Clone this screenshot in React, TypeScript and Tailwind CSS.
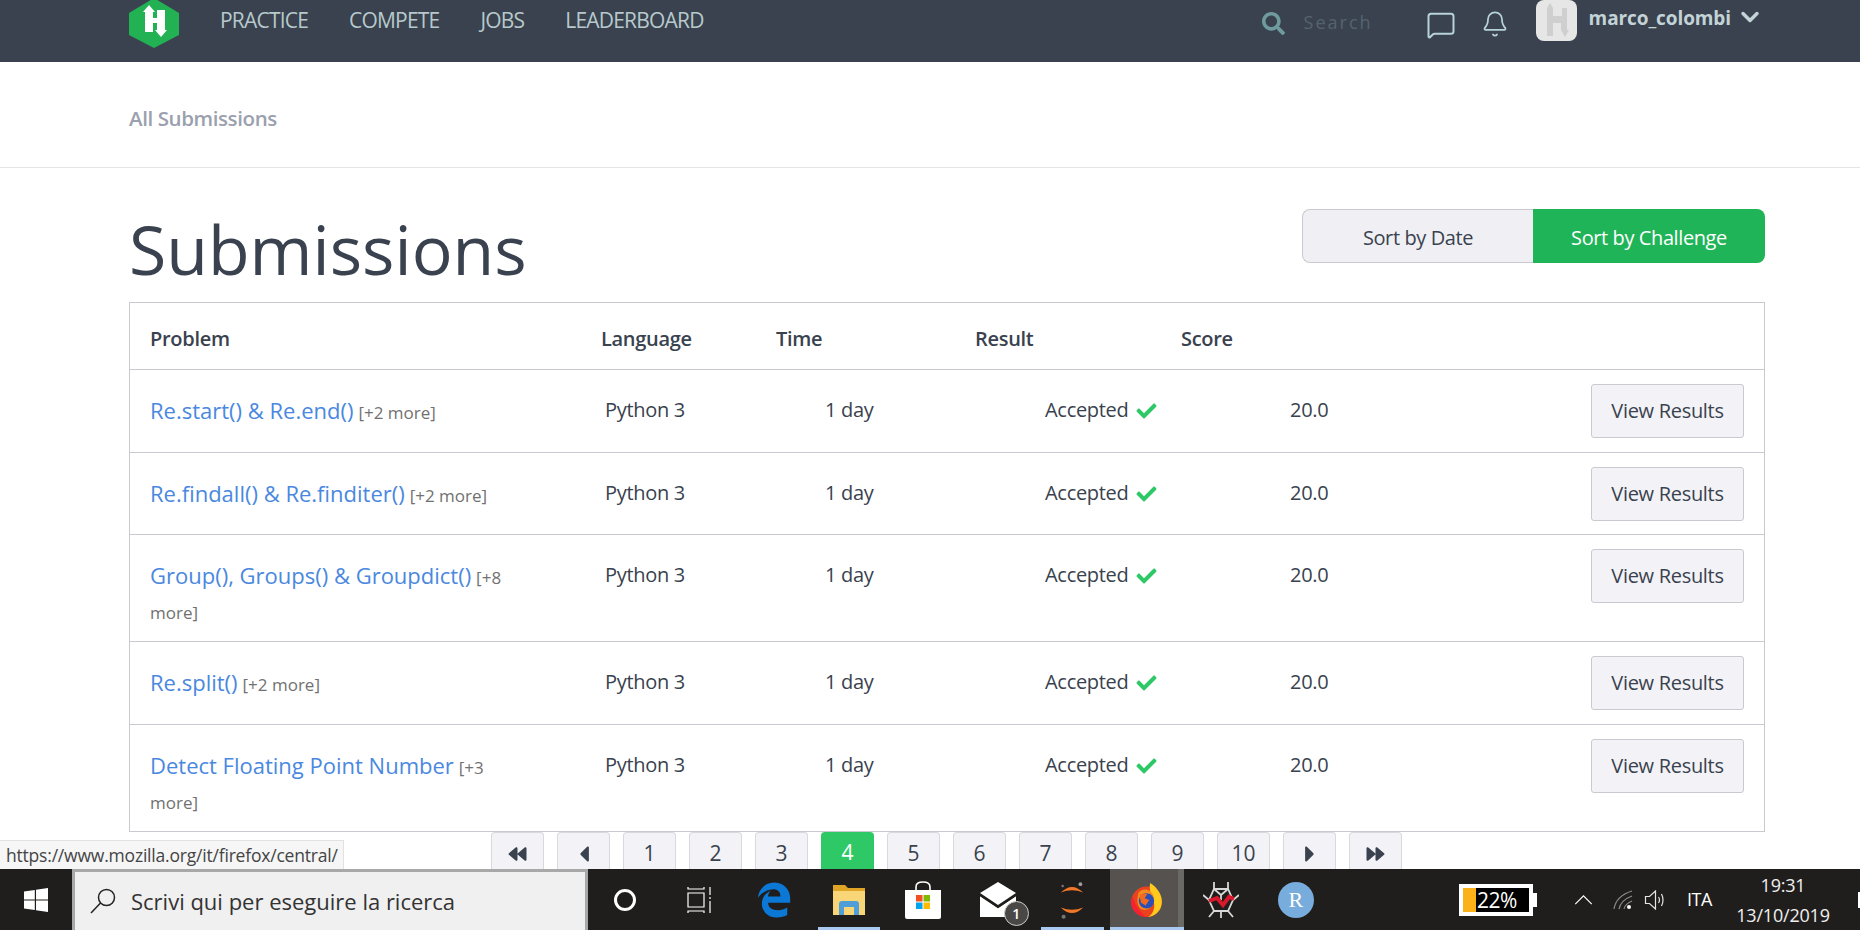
import React from 'react';
import { Bell, ChevronDown, MessageSquare } from 'lucide-react';
import { FaBackward, FaCaretLeft, FaCaretRight, FaCheck, FaForward, FaSearch, FaEdgeLegacy } from 'react-icons/fa';

const rows = [
  { title: 'Re.start() & Re.end()', more: '[+2 more]' },
  { title: 'Re.findall() & Re.finditer()', more: '[+2 more]' },
  { title: 'Group(), Groups() & Groupdict()', more: '[+8 more]' },
  { title: 'Re.split()', more: '[+2 more]' },
  { title: 'Detect Floating Point Number', more: '[+3 more]' },
];

const pages = ['1', '2', '3', '4', '5', '6', '7', '8', '9', '10'];

const Logo = () => (
  <svg viewBox="0 0 50 48" className="w-[50px] h-[48px]">
    <path d="M0 13 L25 -2 L50 13 V35 L25 48 L0 35 Z" fill="#22b254" />
    <path d="M20 5 L26 12 H24 V18 H28 V10 H36 V30 H38 L32 37 L26 30 H28 V23 H24 V32 H16 V12 H14 Z" fill="#fff" />
  </svg>
);

const Avatar = () => (
  <svg viewBox="0 0 41 41" className="w-[41px] h-[41px]">
    <path d="M11 8 L14 3 L17 8 V16 H26 V8 H31 V30 H33 L29 37 L25 30 V23 H17 V36 H11 Z" fill="#cfcfcf" />
  </svg>
);

const PageButton = ({ children, active }: { children: React.ReactNode; active?: boolean }) => (
  <div
    className={
      active
        ? 'w-[53px] h-[38px] pt-[5px] shrink-0 flex items-center justify-center rounded-t bg-[#2ec866] text-white text-[21px]'
        : 'w-[53px] h-[38px] pt-[5px] shrink-0 flex items-center justify-center rounded-t border border-b-0 border-[#d8d8df] bg-[#f3f3f7] text-[#39424e] text-[21px]'
    }
  >
    {children}
  </div>
);

const Row = ({ title, more }: { title: string; more: string }) => (
  <div className="grid grid-cols-[455px_220px_220px_245px_1fr] min-h-[82.5px] border-t border-[#c9c9cf] pl-[20px] pr-[20px] text-[#39424e] text-[20px] tracking-[-0.3px] leading-[36px]">
    <div className="pt-[23px] pb-[11px] pr-[84px] leading-[34px]">
      <a className="text-[#4a88e0] text-[22px] tracking-[0px]">{title}</a>{' '}
      <span className="text-[#717171] text-[17px] tracking-[0px]">{more}</span>
    </div>
    <div className="pt-[22px]">Python 3</div>
    <div className="pt-[22px]">1 day</div>
    <div className="pt-[22px] flex items-start gap-[7px] h-[58px]">
      Accepted <FaCheck className="text-[#2ec866] w-[23px] h-[20px] mt-[9px]" />
    </div>
    <div className="pt-[22px] flex justify-between items-start">
      <span>20.0</span>
      <button className="mt-[-8px] w-[153px] h-[54px] rounded-[3px] border border-[#c9c9cf] bg-[#f3f3f7] text-[20px] tracking-[-0.3px]">
        View Results
      </button>
    </div>
  </div>
);

const Firefox = () => (
  <svg viewBox="0 0 36 40" className="w-[33px] h-[36px]">
    <circle cx="18" cy="22" r="17" fill="#e8421f" />
    <path d="M18 39 A17 17 0 0 1 2 16 Q8 32 18 39 Z" fill="#f7202f" />
    <path d="M22 1 C30 6 36 14 35 24 C34 33 27 38 20 39 C28 33 28 24 24 16 C22 12 21 6 22 1 Z" fill="#ffc91e" />
    <path d="M9 12 C14 6 22 8 25 14 C29 22 24 31 16 31 C9 31 6 24 9 12 Z" fill="#f58a1f" />
    <circle cx="18" cy="21" r="8.5" fill="#2c4fb5" />
    <path d="M10 14 L19 13 L16 18 L21 20 L17 26 L12 23 Z" fill="#f26a22" />
  </svg>
);

const TaskIcon = ({ children, underline, active }: { children?: React.ReactNode; underline?: boolean; active?: boolean }) => (
  <div className={active ? 'relative w-[74.5px] h-full flex items-center justify-center bg-[#55524f]' : 'relative w-[74.5px] h-full flex items-center justify-center'}>
    {active && <div className="absolute right-0 top-0 bottom-0 w-[6px] bg-[#6b6966]" />}
    {children}
    {underline && <div className={active ? 'absolute left-0 right-0 bottom-0 h-[3px] bg-[#a9c9f0]' : 'absolute left-[6px] right-[6px] bottom-0 h-[3px] bg-[#a9c9f0]'} />}
  </div>
);

export default function App() {
  return (
    <div className="h-[930px] w-[1860px] flex flex-col overflow-hidden bg-white font-['Open_Sans',sans-serif]">
      <header className="h-[62px] shrink-0 bg-[#39424e] flex items-start pl-[129px] pr-[96px]">
        <Logo />
        <nav className="flex ml-[41px] gap-[41px] mt-[6px] text-[21px] leading-[28px] text-[#b7c9cc] tracking-[-0.8px]">
          <span>PRACTICE</span>
          <span>COMPETE</span>
          <span>JOBS</span>
          <span>LEADERBOARD</span>
        </nav>
        <div className="ml-auto flex items-start">
          <FaSearch className="w-[23px] h-[23px] mt-[12px] text-[#6f9a9e]" />
          <span className="ml-[19px] mt-[9px] w-[122px] text-[18px] leading-[26px] tracking-[2px] text-[#56636e]">Search</span>
          <MessageSquare className="w-[30px] h-[30px] mt-[10px] text-[#b7d3d9]" strokeWidth={1.6} />
          <Bell className="w-[28px] h-[28px] mt-[10px] ml-[25px] text-[#b7d3d9]" strokeWidth={1.5} />
          <div className="ml-[27px] w-[41px] h-[41px] rounded-lg bg-[#e6e6e6]">
            <Avatar />
          </div>
          <span className="ml-[12px] mt-[4px] text-[19px] leading-[28px] font-bold text-[#c3d3d7] tracking-[-0.1px]">marco_colombi</span>
          <ChevronDown className="ml-[5px] mt-[3px] w-[28px] h-[28px] text-[#c3d3d7]" strokeWidth={3} />
        </div>
      </header>

      <main className="relative flex-1 min-h-0 overflow-hidden">
        <div className="h-[106px] border-b border-[#e5e5e5] pl-[129px] pt-[8px] flex items-center">
          <span className="text-[#9aa0ae] text-[20.5px] font-semibold tracking-[-0.4px]">All Submissions</span>
        </div>
        <div className="pl-[129px] pr-[95px]">
          <div className="h-[134px] flex justify-between items-start">
            <h1 className="mt-[37px] text-[68px] leading-[88px] font-medium text-[#39424e]">Submissions</h1>
            <div className="mt-[41px] flex h-[54px] text-[20px] tracking-[-0.4px]">
              <div className="w-[231px] pt-[3px] flex items-center justify-center rounded-l-lg border border-[#c9c9cf] border-r-0 bg-[#f0f0f4] text-[#39424e]">Sort by Date</div>
              <div className="w-[232px] pt-[3px] flex items-center justify-center rounded-r-lg bg-[#1fb457] text-white">Sort by Challenge</div>
            </div>
          </div>
          <div className="border border-[#c9c9cf]">
            <div className="h-[66px] pt-[5px] grid grid-cols-[451px_175px_199px_206px_1fr] items-center pl-[20px] text-[20px] font-semibold text-[#39424e] tracking-[-0.3px]">
              <div>Problem</div>
              <div>Language</div>
              <div>Time</div>
              <div>Result</div>
              <div>Score</div>
            </div>
            {rows.map((r) => (
              <Row key={r.title} title={r.title} more={r.more} />
            ))}
          </div>
          <div className="flex gap-[13px] pl-[362px]">
            <PageButton><FaBackward className="w-[21px] h-[18px]" /></PageButton>
            <PageButton><FaCaretLeft className="w-[24px] h-[26px]" /></PageButton>
            {pages.map((p) => (
              <PageButton key={p} active={p === '4'}>{p}</PageButton>
            ))}
            <PageButton><FaCaretRight className="w-[24px] h-[26px]" /></PageButton>
            <PageButton><FaForward className="w-[21px] h-[18px]" /></PageButton>
          </div>
        </div>
        <div className="absolute left-0 bottom-0 w-[344px] h-[29px] flex items-center pl-[6px] bg-[#f6f6f6] border border-[#e2e2e2] border-l-0 border-b-0 text-[17.5px] text-[#444] tracking-[-0.2px] whitespace-nowrap">
          https://www.mozilla.org/it/firefox/central/
        </div>
      </main>

      <footer className="h-[61px] shrink-0 bg-[#201e1c] flex items-center text-white relative">
        <div className="w-[72px] h-full flex items-center justify-center">
          <svg viewBox="0 0 24 24" className="w-[24px] h-[24px]" fill="#fff">
            <path d="M0 3.4 L10.8 1.9 V11.4 H0 Z M12 1.7 L24 0 V11.4 H12 Z M0 12.6 H10.8 V22.1 L0 20.6 Z M12 12.6 H24 V24 L12 22.3 Z" />
          </svg>
        </div>
        <div className="w-[516px] h-full bg-[#f0f0f0] border-[3px] border-b-0 border-[#a8a8a8] flex items-center pl-[15px] text-[#333]">
          <svg viewBox="0 0 26 26" className="w-[26px] h-[26px]" fill="none" stroke="#222" strokeWidth="1.5">
            <circle cx="16.5" cy="9.5" r="8" />
            <path d="M10.5 15 L1 25" />
          </svg>
          <span className="ml-[15px] text-[22px]">Scrivi qui per eseguire la ricerca</span>
        </div>
        <div className="flex h-full">
          <TaskIcon>
            <div className="w-[22px] h-[22px] rounded-full border-[3px] border-white" />
          </TaskIcon>
          <TaskIcon>
            <svg viewBox="0 0 26 28" className="w-[26px] h-[28px]" fill="none" stroke="#fff" strokeWidth="1.2">
              <path d="M1 1 V3 H17 V1 M1 7 H17 V21 H1 Z M1 27 V25 H17 V27 M23 1 V9 M23 11 V13 M23 15 V27" />
            </svg>
          </TaskIcon>
          <TaskIcon>
            <FaEdgeLegacy className="w-[36px] h-[38px] text-[#0b78d6]" />
          </TaskIcon>
          <TaskIcon underline>
            <svg viewBox="0 0 32 34" className="w-[32px] h-[34px]">
              <path d="M0 2 H12 L15 5 H32 V32 H0 Z" fill="#e0a526" />
              <path d="M0 8 H32 V32 H0 Z" fill="#f8d678" />
              <path d="M6 32 V21 Q6 18 9 18 H23 Q26 18 26 21 V32 H21 V24 H11 V32 Z" fill="#4f9ed8" />
            </svg>
          </TaskIcon>
          <TaskIcon>
            <svg viewBox="0 0 36 38" className="w-[36px] h-[38px]">
              <path d="M11 9 V6 Q11 1 18 1 Q25 1 25 6 V9" fill="none" stroke="#fff" strokeWidth="1.6" />
              <path d="M0 9 H36 V36 Q36 38 34 38 H2 Q0 38 0 36 Z" fill="#fff" />
              <rect x="11" y="14" width="6.5" height="6.5" fill="#f25022" />
              <rect x="18.5" y="14" width="6.5" height="6.5" fill="#7fba00" />
              <rect x="11" y="21.5" width="6.5" height="6.5" fill="#00a4ef" />
              <rect x="18.5" y="21.5" width="6.5" height="6.5" fill="#ffb900" />
            </svg>
          </TaskIcon>
          <TaskIcon>
            <div className="relative">
              <svg viewBox="0 0 36 38" className="w-[36px] h-[38px]">
                <path d="M0 12 L18 1 L36 12 L18 24 Z" fill="#fff" />
                <path d="M0 15 L18 27 L36 15 V36 H0 Z" fill="#fff" />
                <path d="M0 14 L18 26 L36 14" fill="none" stroke="#201e1c" strokeWidth="2" />
              </svg>
              <div className="absolute left-[24px] top-[20px] w-[25px] h-[25px] rounded-full bg-[#4a4846] border border-[#ccc] flex items-center justify-center text-[14px] font-semibold">1</div>
            </div>
          </TaskIcon>
          <TaskIcon underline>
            <svg viewBox="0 0 30 44" className="w-[28px] h-[42px]">
              <path d="M3 14 Q15 2 27 14 Q15 9 3 14 Z" fill="#f37726" />
              <path d="M3 30 Q15 42 27 30 Q15 35 3 30 Z" fill="#f37726" />
              <circle cx="24" cy="5" r="2" fill="#9e9e9e" />
              <circle cx="5" cy="7" r="1.4" fill="#767677" />
              <circle cx="6" cy="40" r="2.2" fill="#767677" />
            </svg>
          </TaskIcon>
          <TaskIcon underline active>
            <Firefox />
          </TaskIcon>
          <TaskIcon>
            <svg viewBox="0 0 36 38" className="w-[36px] h-[38px]" fill="none" stroke="#d8d8d8" strokeWidth="1.8">
              <path d="M11 8 H25 L30 19 L25 30 H11 L6 19 Z" />
              <path d="M11 1 L11 8 M25 1 L25 8 M0 14 L6 19 M36 14 L30 19 M6 36 L11 30 M30 36 L25 30 M18 37 V30 M11 8 L18 14 L25 8 M18 14 V19" />
              <path d="M6 20 L14 17 L20 24 L26 16 L31 18" stroke="#d9182b" strokeWidth="4" />
            </svg>
          </TaskIcon>
          <TaskIcon>
            <div className="w-[36px] h-[36px] rounded-full bg-[#78acdc] flex items-center justify-center font-['Liberation_Serif',serif] text-[22px] text-white">R</div>
          </TaskIcon>
        </div>
        <div className="ml-auto flex items-center h-full">
          <div className="flex items-center mr-[37px]">
            <div className="w-[74px] h-[32px] bg-white p-[4px] flex">
              <div className="w-[13px] h-full bg-[#fbb117]" />
              <div className="flex-1 bg-black text-[21px] leading-[24px] pl-[1px] tracking-[-0.5px]">22%</div>
            </div>
            <div className="w-[4px] h-[14px] bg-white" />
          </div>
          <svg viewBox="0 0 20 12" className="w-[19px] h-[11px]" fill="none" stroke="#fff" strokeWidth="1.3">
            <path d="M1 11 L10 2 L19 11" />
          </svg>
          <svg viewBox="0 0 20 20" className="ml-[20px] w-[20px] h-[20px]" fill="none" stroke="#8c8c8c" strokeWidth="1.2">
            <path d="M1 19 Q3 6 19 1 M6 19 Q8 10 19 6 M11 19 Q12 14 19 11" />
            <circle cx="16" cy="17" r="2" fill="#fff" stroke="none" />
          </svg>
          <svg viewBox="0 0 22 20" className="ml-[11px] w-[23px] h-[20px]" fill="none" stroke="#e5e5e5" strokeWidth="1.2">
            <path d="M1 6.5 H5 L11 1 V19 L5 13.5 H1 Z M14 7 Q16 10 14 13 M17 4 Q20 10 17 16" />
          </svg>
          <span className="ml-[20px] text-[18px] tracking-[-0.4px]">ITA</span>
          <div className="ml-[13px] w-[116px] text-center text-[18px] leading-[30px] text-[#f0f0f0] tracking-[-0.2px]">
            <div>19:31</div>
            <div>13/10/2019</div>
          </div>
          <div className="ml-[17px] w-[2px] h-[16px] bg-white" />
        </div>
      </footer>
    </div>
  );
}
